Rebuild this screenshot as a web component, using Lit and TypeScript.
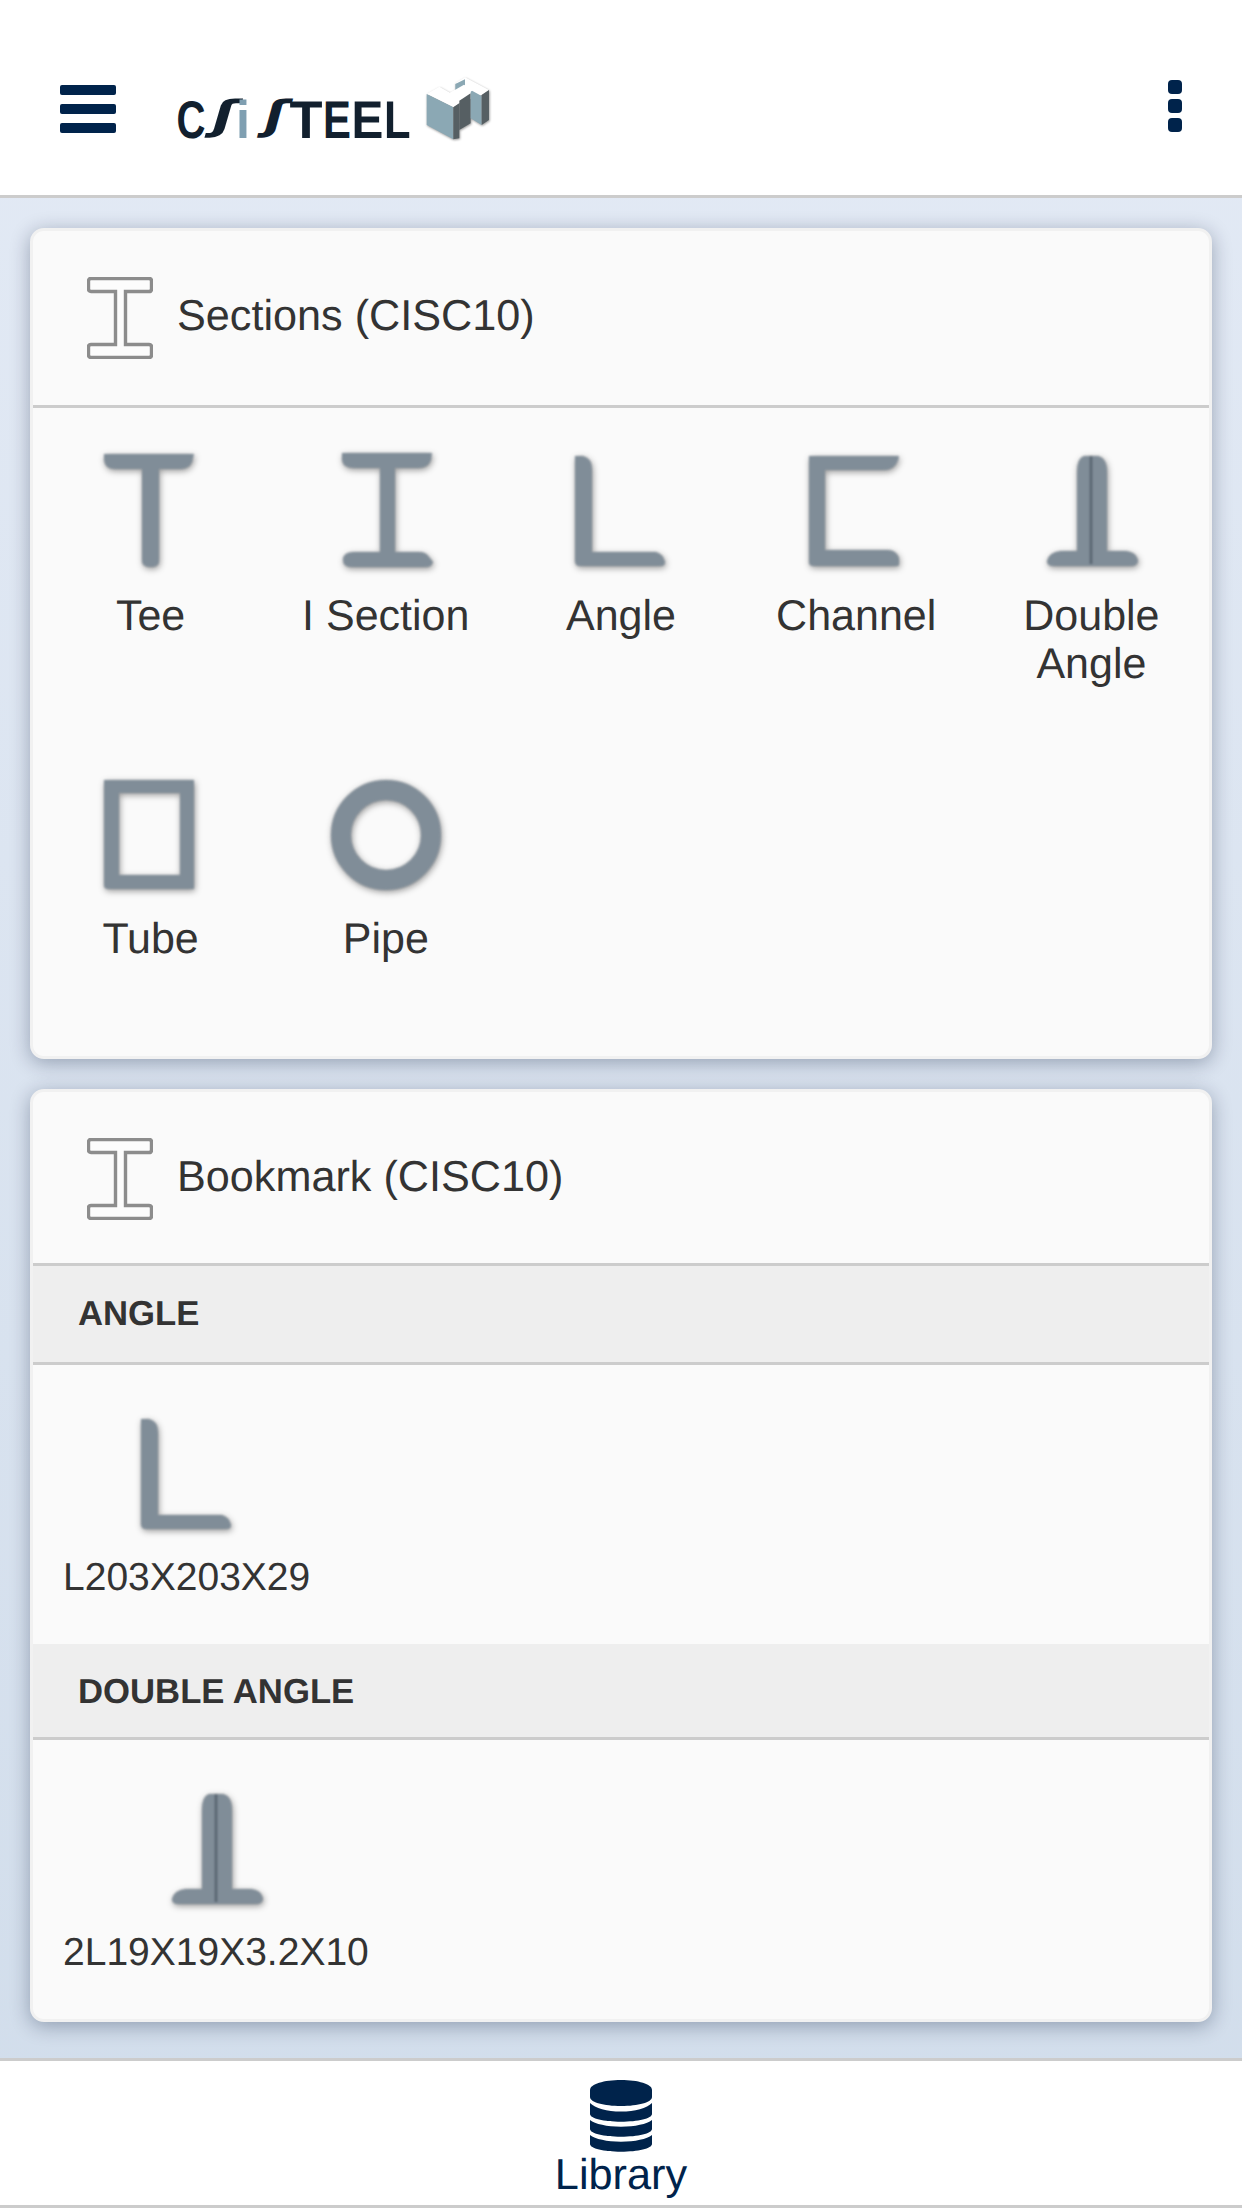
import { LitElement, html, css, svg } from "lit";
import { customElement } from "lit/decorators.js";

const shapes = {
  tee: svg`<path d="M13 6H103L101 14Q98 21 90 21H68V113Q68 119 60 119Q51 119 51 113V21H24Q14 21 13 12Z"/>`,
  isec: svg`<path d="M16 5H106L105 12Q102 20 93 20H69V104H93Q100 104 103 109L107 114Q106 119 100 119H25Q17 119 17 112Q17 104 28 104H54V20H28Q17 20 16 12Z"/>`,
  angle: svg`<path d="M14 8H22Q31 10 31 22V104H95Q102 106 104 114Q104 118 100 118H19Q14 118 14 113Z"/>`,
  channel: svg`<path d="M13 8H103Q103 12 100 16Q96 22 88 22H29V102H92Q100 102 103 110V116Q103 118 100 118H17Q13 118 13 114Z"/>`,
  double: svg`<path d="M53 8H67Q76 10 76 24V103H95Q105 104 107 112Q107 118 100 118H22Q16 118 16 113Q18 104 30 103H46V24Q46 10 53 8Z"/><path class="seam" d="M60 8V116"/>`,
  tube: svg`<path fill-rule="evenodd" d="M13 6H103V115H17Q13 115 13 111ZM28 19V101H89V19Z"/>`,
  pipe: svg`<circle class="ring" cx="60" cy="61" r="45"/>`,
};

type Shape = keyof typeof shapes;

@customElement("app-root")
export class AppRoot extends LitElement {
  static styles = css`
    :host {
      display: flex;
      flex-direction: column;
      width: 1242px;
      height: 2208px;
      font-family: "Liberation Sans", Arial, sans-serif;
      text-rendering: geometricPrecision;
      color: #333;
      background: linear-gradient(#e3eaf5, #d1ddeb);
      overflow: hidden;
    }
    .top {
      box-sizing: border-box;
      height: 198px;
      flex: none;
      display: flex;
      align-items: flex-start;
      padding: 70px 60px 0;
      background: #fff;
      border-bottom: 3px solid #ccc;
    }
    .burger {
      display: flex;
      flex-direction: column;
      gap: 9.5px;
      width: 56px;
      margin-top: 15px;
    }
    .burger i {
      display: block;
      height: 9.5px;
      background: #00234b;
      border-radius: 2px;
    }
    .logo {
      width: 334px;
      height: 84px;
      margin-left: 54px;
    }
    .logo text {
      font-family: "Liberation Sans", Arial, sans-serif;
      font-weight: 700;
      font-size: 53px;
      fill: #12202e;
    }
    .logo .esh {
      font-family: "DejaVu Sans", sans-serif;
      font-size: 40px;
      font-style: italic;
    }
    .logo .blue {
      fill: #7f9fb1;
    }
    .block {
      filter: drop-shadow(2px 3px 3px rgba(0, 0, 0, 0.4));
    }
    .dots {
      display: flex;
      flex-direction: column;
      gap: 5px;
      margin: 10px 0 0 auto;
    }
    .dots i {
      display: block;
      width: 14px;
      height: 14px;
      background: #00234b;
      border-radius: 4px;
    }
    main {
      flex: 1;
      min-height: 0;
      display: flex;
      flex-direction: column;
      gap: 30px;
      padding: 30px 30px 0;
    }
    .card {
      flex: none;
      background: #fafafa;
      border: 3px solid #f1f1f1;
      border-radius: 14px;
      box-shadow: 0 4px 20px rgba(0, 20, 50, 0.32);
    }
    .head {
      box-sizing: border-box;
      height: 177px;
      display: flex;
      align-items: flex-start;
      gap: 24px;
      padding: 46px 0 0 54px;
      border-bottom: 3px solid #ccc;
    }
    .head.short {
      height: 174px;
    }
    .head svg {
      width: 66px;
      height: 82px;
      flex: none;
      filter: blur(0.5px);
    }
    .head path {
      fill: #fcfcfc;
      stroke: #8c8c8c;
      stroke-width: 3.4;
    }
    .head span {
      font-size: 43.2px;
      line-height: 48px;
      margin-top: 15px;
    }
    .grid {
      display: grid;
      grid-template-columns: repeat(5, 1fr);
      row-gap: 86.5px;
      padding: 40px 0 93.5px;
    }
    .tile {
      display: flex;
      flex-direction: column;
      align-items: center;
      text-align: center;
    }
    .tile span {
      font-size: 43px;
      line-height: 48px;
      margin-top: 19.5px;
      width: 200px;
    }
    .tile.low span {
      margin-top: 16.5px;
    }
    .shape {
      display: block;
      width: 120px;
      height: 124px;
      flex: none;
      fill: #808d98;
      filter: blur(0.8px) drop-shadow(1px 2px 3px rgba(0, 0, 0, 0.4));
    }
    .shape .seam {
      fill: none;
      stroke: #56626d;
      stroke-width: 2.4;
    }
    .shape .ring {
      fill: none;
      stroke: #808d98;
      stroke-width: 20;
    }
    .sub {
      box-sizing: border-box;
      height: 99px;
      padding: 28px 0 0 45px;
      background: #eee;
      border-bottom: 3px solid #ccc;
      font-size: 34.7px;
      line-height: 40px;
      font-weight: 700;
    }
    .sub.tight {
      height: 96px;
    }
    .row {
      box-sizing: border-box;
      height: 279px;
      display: flex;
      padding: 45.5px 0 0 30px;
    }
    .item {
      display: flex;
      flex-direction: column;
      align-items: center;
    }
    .item span {
      font-size: 39px;
      line-height: 46px;
      margin-top: 20.5px;
    }
    footer {
      box-sizing: border-box;
      height: 150px;
      flex: none;
      display: flex;
      flex-direction: column;
      align-items: center;
      padding-top: 19px;
      background: #fff;
      border-top: 3px solid #ccc;
      border-bottom: 3px solid #ccc;
      color: #00234b;
    }
    footer svg {
      width: 62px;
      height: 72px;
      fill: #00234b;
    }
    footer span {
      font-size: 43.3px;
      line-height: 48px;
      margin-top: -1.5px;
    }
  `;

  private shape(name: Shape) {
    return html`<svg class="shape" viewBox="0 0 120 124">${shapes[name]}</svg>`;
  }

  private head(title: string, short = false) {
    return html`<div class="head ${short ? "short" : ""}">
      <svg viewBox="0 0 66 82">
        <path d="M4 1.5H62Q64.5 1.5 64.5 4V12Q64.5 14.5 62 14.5H38.5V67.5H62Q64.5 67.5 64.5 70V78Q64.5 80.5 62 80.5H4Q1.5 80.5 1.5 78V70Q1.5 67.5 4 67.5H28.5V14.5H4Q1.5 14.5 1.5 12V4Q1.5 1.5 4 1.5Z"/>
      </svg>
      <span>${title}</span>
    </div>`;
  }

  private logo() {
    return html`<svg class="logo" viewBox="0 0 334 84" aria-label="CSiSTEEL">
      <text transform="translate(6.6 68) scale(.757 1)">C</text>
      <text class="esh" transform="translate(42 59) scale(1.5 1)">ʃ</text>
      <text class="blue" transform="translate(66 68) scale(.95 1)">i</text>
      <text class="esh" transform="translate(94 59) scale(1.4 1)">ʃ</text>
      <text transform="translate(119.5 68) scale(1.02 1)">T</text>
      <text transform="translate(153 68) scale(.79 1)">E</text>
      <text transform="translate(181.5 68) scale(.9 1)">E</text>
      <text transform="translate(214 68) scale(.82 1)">L</text>
      <g class="block" transform="translate(250 0) scale(.3333)">
        <polygon fill="#fff" points="20,72 58,50 90,68 132,44 105,40 135,22 207,60 185,75 118,100 100,112" />
        <polygon fill="#8ba8b4" points="106,42 135,28 135,52 106,64" />
        <polygon fill="#8ba8b4" points="20,72 100,112 100,208 20,165" />
        <polygon fill="#565f63" points="100,112 118,100 118,205 100,208" />
        <polygon fill="#565f63" points="118,92 152,70 152,160 118,180" />
        <polygon fill="#8ba8b4" points="152,60 185,78 185,165 152,145" />
        <polygon fill="#565f63" points="185,75 207,60 207,150 185,165" />
        <polygon fill="#fff" points="90,68 132,44 160,60 118,86" />
      </g>
    </svg>`;
  }

  render() {
    const row1: [Shape, string][] = [
      ["tee", "Tee"],
      ["isec", "I Section"],
      ["angle", "Angle"],
      ["channel", "Channel"],
      ["double", "Double Angle"],
    ];
    const row2: [Shape, string][] = [
      ["tube", "Tube"],
      ["pipe", "Pipe"],
    ];
    return html`
      <header class="top">
        <div class="burger"><i></i><i></i><i></i></div>
        ${this.logo()}
        <div class="dots"><i></i><i></i><i></i></div>
      </header>
      <main>
        <section class="card">
          ${this.head("Sections (CISC10)")}
          <div class="grid">
            ${row1.map(([s, t]) => html`<div class="tile">${this.shape(s)}<span>${t}</span></div>`)}
            ${row2.map(([s, t]) => html`<div class="tile low">${this.shape(s)}<span>${t}</span></div>`)}
          </div>
        </section>
        <section class="card">
          ${this.head("Bookmark (CISC10)", true)}
          <div class="sub">ANGLE</div>
          <div class="row">
            <div class="item">${this.shape("angle")}<span>L203X203X29</span></div>
          </div>
          <div class="sub tight">DOUBLE ANGLE</div>
          <div class="row">
            <div class="item">${this.shape("double")}<span>2L19X19X3.2X10</span></div>
          </div>
        </section>
      </main>
      <footer>
        <svg viewBox="0 0 62 72">
          <path d="M0 10C0 4 14 0 31 0S62 4 62 10V17C62 22.5 48 26 31 26S0 22.5 0 17Z"/>
          <path d="M0 23C5 28 17 31.6 31 31.6S57 28 62 23V34C62 38.5 48 41.7 31 41.7S0 38.5 0 34Z"/>
          <path d="M0 40C5 44 17 46.7 31 46.7S57 44 62 40V49C62 53.5 48 56.7 31 56.7S0 53.5 0 49Z"/>
          <path d="M0 55C5 59 17 61.7 31 61.7S57 59 62 55V64C62 68.5 48 71.7 31 71.7S0 68.5 0 64Z"/>
        </svg>
        <span>Library</span>
      </footer>
    `;
  }
}
